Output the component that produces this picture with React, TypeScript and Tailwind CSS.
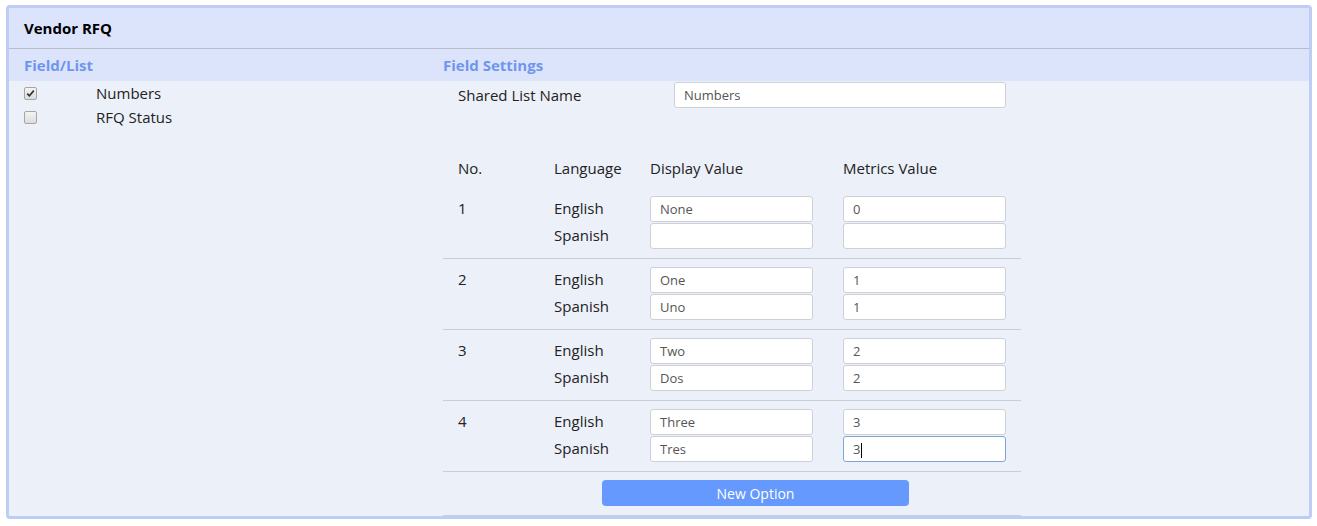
import React from "react";

interface OptionRow {
  no: number;
  english: [string, string];
  spanish: [string, string];
}

const OPTIONS: OptionRow[] = [
  { no: 1, english: ["None", "0"], spanish: ["", ""] },
  { no: 2, english: ["One", "1"], spanish: ["Uno", "1"] },
  { no: 3, english: ["Two", "2"], spanish: ["Dos", "2"] },
  { no: 4, english: ["Three", "3"], spanish: ["Tres", "3"] },
];

const font = { fontFamily: '"Open Sans", "Noto Sans", Arial, sans-serif' };

function Box({ checked }: { checked?: boolean }) {
  return (
    <span className="flex h-[13px] w-[13px] items-center justify-center rounded-[2px] border border-[#a6a6a6] bg-gradient-to-b from-[#f4f4f4] to-[#dcdcdc]">
      {checked && (
        <svg width="9" height="9" viewBox="0 0 9 9">
          <path d="M1.2 4.6 L3.4 6.8 L7.8 1.6" fill="none" stroke="#333" strokeWidth="1.7" />
        </svg>
      )}
    </span>
  );
}

function Field({ value, focused }: { value: string; focused?: boolean }) {
  return (
    <div
      className={`flex h-[26px] w-[163px] items-center rounded-[3px] border bg-white pl-[9px] pt-[2px] text-[13px] text-[#555] ${
        focused ? "border-[#7fa7d6]" : "border-[#cdd0d6]"
      }`}
    >
      {value}
      {focused && <span className="ml-px h-[15px] w-px bg-black" />}
    </div>
  );
}

export default function App() {
  return (
    <div className="h-[526px] w-[1317px] bg-white pl-[6px] pt-[5px] text-[15px] text-[#222]" style={font}>
      <div className="flex h-[514px] w-[1306px] flex-col overflow-hidden rounded-[4px] border-[3px] border-[#bfcdf5] bg-[#ecf0f9]">
        <div className="flex h-[41px] shrink-0 items-center border-b border-[#b8bdc9] bg-[#dce4fc] pl-[15px] text-[15px] font-bold text-black">
          Vendor RFQ
        </div>
        <div className="flex min-h-0 flex-1">
          <div className="w-[434px] shrink-0">
            <div className="flex h-[32px] items-center bg-[#dce4fc] pl-[15px] font-bold text-[#6f96ec]">Field/List</div>
            <div className="flex h-6 items-center">
              <span className="ml-[15px]"><Box checked /></span>
              <span className="ml-[59px]">Numbers</span>
            </div>
            <div className="flex h-6 items-center">
              <span className="ml-[15px]"><Box /></span>
              <span className="ml-[59px]">RFQ Status</span>
            </div>
          </div>
          <div className="flex-1">
            <div className="flex h-[32px] items-center bg-[#dce4fc] font-bold text-[#6f96ec]">Field Settings</div>
            <div className="w-[578px]">
              <div className="mt-px flex h-[26px] items-center pl-[15px]">
                <span className="w-[216px]">Shared List Name</span>
                <div className="flex h-[26px] w-[332px] items-center rounded-[3px] border border-[#cdd0d6] bg-white pl-[9px] pt-[2px] text-[13px] text-[#555]">
                  Numbers
                </div>
              </div>
              <div className="mt-[47px] grid h-[26px] grid-cols-[96px_96px_193px_163px] items-center pl-[15px]">
                <span>No.</span>
                <span>Language</span>
                <span>Display Value</span>
                <span>Metrics Value</span>
              </div>
              {OPTIONS.map((o) => (
                <div
                  key={o.no}
                  className={`border-b border-[#c9cdd6] pb-[9px] pl-[15px] ${o.no === 1 ? "pt-[15px]" : "pt-2"}`}
                >
                  <div className="grid grid-cols-[96px_96px_193px_163px] items-center">
                    <span className="-mt-[2px]">{o.no}</span>
                    <span className="-mt-[2px]">English</span>
                    <Field value={o.english[0]} />
                    <Field value={o.english[1]} />
                  </div>
                  <div className="mt-px grid grid-cols-[96px_96px_193px_163px] items-center">
                    <span />
                    <span className="-mt-[2px]">Spanish</span>
                    <Field value={o.spanish[0]} />
                    <Field value={o.spanish[1]} focused={o.no === 4} />
                  </div>
                </div>
              ))}
              <button className="ml-[159px] mt-2 flex h-[26px] w-[307px] items-center justify-center rounded-[4px] bg-[#6699fd] text-[14px] text-white">
                New Option
              </button>
              <div className="mt-[9px] h-3 border-t border-[#c9cdd6]" />
            </div>
          </div>
        </div>
      </div>
    </div>
  );
}
